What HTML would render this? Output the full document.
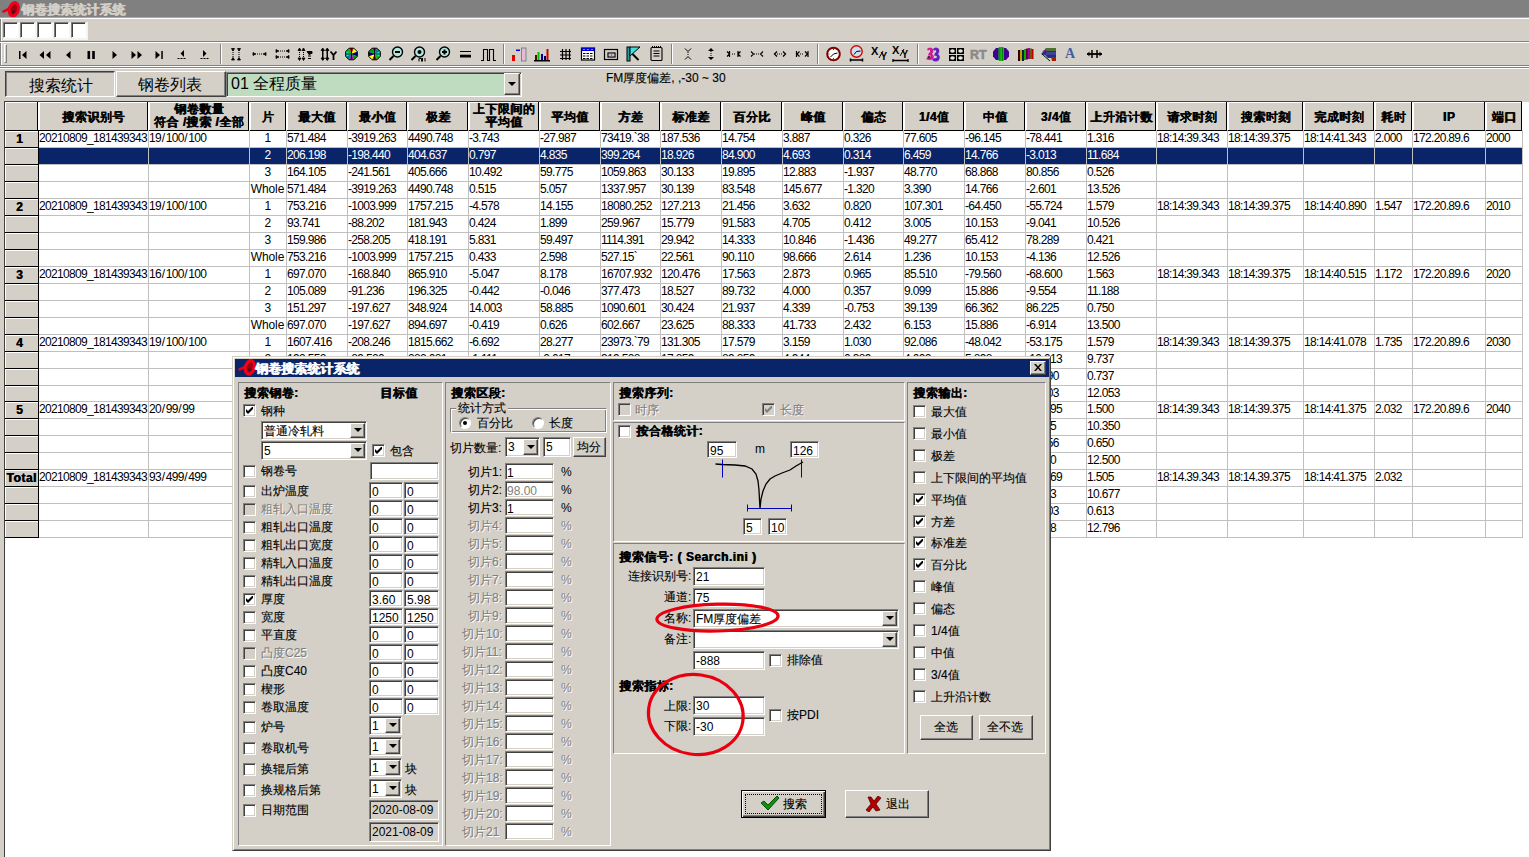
<!DOCTYPE html><html><head><meta charset="utf-8"><style>
*{margin:0;padding:0}
html,body{width:1529px;height:857px;overflow:hidden;background:#D4D0C8;font-family:"Liberation Sans",sans-serif;position:relative}
body>div,body>svg{position:absolute;box-sizing:border-box}
.t{font-size:12px;line-height:13px;white-space:nowrap;color:#000;-webkit-text-stroke:0.12px currentColor}
.ta{font-size:12px;line-height:13px;white-space:nowrap;color:#000}
.tb{font-size:12px;line-height:13px;white-space:nowrap;font-weight:bold;color:#000;text-shadow:0.6px 0 0 currentColor;letter-spacing:0.5px}
.ttl{font-size:13px;line-height:14px;white-space:nowrap;font-weight:bold;text-shadow:0.7px 0 0 currentColor;letter-spacing:0}
.dis{color:#808080;text-shadow:1px 1px 0 #fff}
.n{font-size:12px;line-height:13px;white-space:nowrap;letter-spacing:-0.67px;overflow:hidden}
.big{font-size:16px;line-height:18px;white-space:nowrap;color:#000}
.hd2{text-align:center;line-height:13px}
.hc{background:#D4D0C8;border-right:1px solid #000;border-bottom:1px solid #000;box-shadow:inset 1px 1px #fff}
.box{background:#fff;border:1px solid;border-color:#808080 #fff #fff #808080;box-shadow:inset 1px 1px #404040, 1px 1px 0 1px #F4F4F0;width:15px;height:16px}
.raise{background:#D4D0C8;border:1px solid;border-color:#fff #404040 #404040 #fff;box-shadow:inset -1px -1px #808080}
.btn{background:#D4D0C8;border:1px solid;border-color:#fff #404040 #404040 #fff;box-shadow:inset -1px -1px #808080}
.btn.def{border:1px solid #000;box-shadow:inset 1px 1px #fff, inset -1px -1px #404040, inset -2px -2px #808080}
.fld{border:1px solid;border-color:#808080 #fff #fff #808080;box-shadow:inset 1px 1px #404040, inset -1px -1px #D4D0C8}
.cb{width:13px;height:13px;border:1px solid;border-color:#808080 #fff #fff #808080;box-shadow:inset 1px 1px #404040, inset -1px -1px #D4D0C8}
.pan{border:1px solid;border-color:#808080 #fff #fff #808080}
.etch{border:1px solid;border-color:#808080 #fff #fff #808080;box-shadow:inset 1px 1px #fff, inset -1px -1px #808080}
.dlg{background:#D4D0C8;border:1px solid;border-color:#D4D0C8 #404040 #404040 #D4D0C8;box-shadow:inset 1px 1px #fff, inset -1px -1px #808080}
.arr{width:0;height:0;border-left:4px solid transparent;border-right:4px solid transparent;border-top:4px solid #000}
.radio{width:12px;height:12px;border-radius:50%;background:#fff;border:1px solid;border-color:#808080 #fff #fff #808080;box-shadow:inset 1px 1px #404040}
.radio .dot{position:absolute;left:3px;top:3px;width:4px;height:4px;border-radius:50%;background:#000}

</style></head><body>
<div style="left:0;top:0;width:1529px;height:17px;background:#808080"></div>
<svg style="position:absolute;left:2px;top:1px" width="18" height="17" viewBox="0 0 18 17"><path d="M1.5 10.5 L5 9 L8.5 6" stroke="#E8001A" stroke-width="2.6" fill="none" stroke-linecap="round"/><ellipse cx="11.8" cy="8.4" rx="4.4" ry="6.9" transform="rotate(15 11.8 8.4)" fill="#A00010" stroke="#F2001A" stroke-width="3"/><circle cx="11.5" cy="10.8" r="1.4" fill="#301818"/></svg>
<div class="ttl" style="left:21px;top:3px;color:#D4D0C8">钢卷搜索统计系统</div>
<div style="left:0;top:17px;width:1529px;height:1px;background:#A8A8A8"></div>
<div style="left:0;top:18px;width:1529px;height:1px;background:#fff"></div>
<div style="left:0;top:19px;width:1px;height:50px;background:#808080"></div>
<div style="left:1px;top:19px;width:1px;height:50px;background:#fff"></div>
<div class="box" style="left:3px;top:22px"></div>
<div class="box" style="left:20px;top:22px"></div>
<div class="box" style="left:37px;top:22px"></div>
<div class="box" style="left:54px;top:22px"></div>
<div class="box" style="left:71px;top:22px"></div>
<div style="left:0;top:41px;width:1529px;height:1px;background:#808080"></div>
<div style="left:0;top:42px;width:1529px;height:1px;background:#fff"></div>
<div style="left:4px;top:44px;width:3px;height:19px;border-left:1px solid #fff;border-top:1px solid #fff;border-right:1px solid #808080;border-bottom:1px solid #808080"></div>
<div style="left:0;top:65px;width:1529px;height:1px;background:#808080"></div>
<div style="left:0;top:66px;width:1529px;height:1px;background:#fff"></div>
<div style="left:0;top:67px;width:1529px;height:1px;background:#808080"></div>
<div style="left:0;top:68px;width:1529px;height:1px;background:#fff"></div>
<svg style="position:absolute;left:18px;top:46px" width="10" height="14" viewBox="0 0 10 14"><rect x="1" y="5" width="1.5" height="8" fill="#000"/><path d="M8.5 5v8l-4.5-4z" fill="#000"/></svg>
<svg style="position:absolute;left:38px;top:46px" width="14" height="14" viewBox="0 0 14 14"><path d="M6 5v8l-4.5-4zM12.5 5v8l-4.5-4z" fill="#000"/></svg>
<svg style="position:absolute;left:64px;top:46px" width="8" height="14" viewBox="0 0 8 14"><path d="M6.5 5v8l-4.5-4z" fill="#000"/></svg>
<svg style="position:absolute;left:86px;top:46px" width="12" height="14" viewBox="0 0 12 14"><rect x="1.5" y="5" width="2.6" height="8" fill="#000"/><rect x="6.2" y="5" width="2.6" height="8" fill="#000"/></svg>
<svg style="position:absolute;left:111px;top:46px" width="8" height="14" viewBox="0 0 8 14"><path d="M1.5 5v8l4.5-4z" fill="#000"/></svg>
<svg style="position:absolute;left:130px;top:46px" width="14" height="14" viewBox="0 0 14 14"><path d="M1.5 5v8l4.5-4zM7.5 5v8l4.5-4z" fill="#000"/></svg>
<svg style="position:absolute;left:154px;top:46px" width="10" height="14" viewBox="0 0 10 14"><path d="M1.5 5v8l4.5-4z" fill="#000"/><rect x="7.3" y="5" width="1.5" height="8" fill="#000"/></svg>
<svg style="position:absolute;left:176px;top:46px" width="12" height="14" viewBox="0 0 12 14"><path d="M8 4v7l-3.5-3.5z" fill="#000"/><path d="M1.5 12.5h9" stroke="#000" stroke-dasharray="2 1"/></svg>
<svg style="position:absolute;left:199px;top:46px" width="12" height="14" viewBox="0 0 12 14"><path d="M4 4v7l3.5-3.5z" fill="#000"/><path d="M1.5 12.5h9" stroke="#000" stroke-dasharray="2 1"/></svg>
<div style="left:220px;top:44px;width:2px;height:20px;border-left:1px solid #808080;border-right:1px solid #fff"></div>
<svg style="position:absolute;left:230px;top:46px" width="13" height="16" viewBox="0 0 13 16"><path d="M1.5 2.5h3l-1.5 2.5zM7.5 2.5h3l-1.5 2.5zM1.5 14h3l-1.5-2.5zM7.5 14h3l-1.5-2.5z" fill="#000" stroke="#000" stroke-width="0.8"/><path d="M3 4v8M9 4v8" stroke="#000" stroke-dasharray="1 1"/></svg>
<svg style="position:absolute;left:252px;top:46px" width="15" height="16" viewBox="0 0 15 16"><path d="M1 6.5v3l2.5-1.5zM14 6.5v3l-2.5-1.5z" fill="#000" stroke="#000" stroke-width="0.8"/><path d="M3 8h9" stroke="#000" stroke-dasharray="1 1"/></svg>
<svg style="position:absolute;left:275px;top:46px" width="15" height="16" viewBox="0 0 15 16"><path d="M1 3.5v3l2.5-1.5zM14 3.5v3l-2.5-1.5zM1 9.5v3l2.5-1.5zM14 9.5v3l-2.5-1.5z" fill="#000" stroke="#000" stroke-width="0.8"/><path d="M3 5h9M3 11h9" stroke="#000" stroke-dasharray="1 1"/></svg>
<svg style="position:absolute;left:297px;top:46px" width="16" height="16" viewBox="0 0 16 16"><path d="M1 4.5h3l-1.5-2.5zM5 4.5h3l-1.5-2.5zM1 12h3l-1.5 2.5zM5 12h3l-1.5 2.5z" fill="#000" stroke="#000" stroke-width="0.8"/><path d="M2.5 4v8M6.5 4v8" stroke="#000" stroke-dasharray="1 1"/><path d="M10 5.5h5v2h-1.5l-1 1.5zM11 10h3M11 12.5h3" stroke="#000" fill="#000" stroke-width="1"/></svg>
<svg style="position:absolute;left:320px;top:46px" width="17" height="16" viewBox="0 0 17 16"><path d="M1 4.5h3.5l-1.75-2.5zM5.5 4.5h3.5l-1.75-2.5zM1 12h3.5l-1.75 2.5zM5.5 12h3.5l-1.75 2.5z" fill="#000" stroke="#000" stroke-width="0.8"/><path d="M2.75 4v8M7.25 4v8" stroke="#000" stroke-width="1.5"/><path d="M10.5 5.5l3 3.5 3-3.5M13.5 9v5" stroke="#000" stroke-width="1.8" fill="none"/></svg>
<svg style="position:absolute;left:345px;top:47px" width="13" height="14" viewBox="0 0 13 14"><path d="M6.5 7L4.09 1.18L8.91 1.18z" fill="#C00000"/><path d="M6.5 7L8.91 1.18L12.32 4.59z" fill="#FFFF00"/><path d="M6.5 7L12.32 4.59L12.32 9.41z" fill="#0000C0"/><path d="M6.5 7L12.32 9.41L8.91 12.82z" fill="#00A000"/><path d="M6.5 7L8.91 12.82L4.09 12.82z" fill="#A000C0"/><path d="M6.5 7L4.09 12.82L0.68 9.41z" fill="#008080"/><path d="M6.5 7L0.68 9.41L0.68 4.59z" fill="#00E0E0"/><path d="M6.5 7L0.68 4.59L4.09 1.18z" fill="#00C000"/><polygon points="4.09,1.18 8.91,1.18 12.32,4.59 12.32,9.41 8.91,12.82 4.09,12.82 0.68,9.41 0.68,4.59" fill="none" stroke="#000" stroke-width="1"/><path d="M6.5 1v12M0.5 7h12" stroke="#000" stroke-width="0.8"/></svg>
<svg style="position:absolute;left:368px;top:47px" width="13" height="14" viewBox="0 0 13 14"><path d="M6.5 7L4.09 1.18L8.91 1.18z" fill="#A000C0"/><path d="M6.5 7L8.91 1.18L12.32 4.59z" fill="#008080"/><path d="M6.5 7L12.32 4.59L12.32 9.41z" fill="#00E0E0"/><path d="M6.5 7L12.32 9.41L8.91 12.82z" fill="#00C000"/><path d="M6.5 7L8.91 12.82L4.09 12.82z" fill="#C00000"/><path d="M6.5 7L4.09 12.82L0.68 9.41z" fill="#FFFF00"/><path d="M6.5 7L0.68 9.41L0.68 4.59z" fill="#0000C0"/><path d="M6.5 7L0.68 4.59L4.09 1.18z" fill="#00A000"/><polygon points="4.09,1.18 8.91,1.18 12.32,4.59 12.32,9.41 8.91,12.82 4.09,12.82 0.68,9.41 0.68,4.59" fill="none" stroke="#000" stroke-width="1"/><path d="M6.5 1v12M0.5 7h12" stroke="#000" stroke-width="0.8"/></svg>
<svg style="position:absolute;left:388px;top:46px" width="16" height="16" viewBox="0 0 16 16"><circle cx="9.5" cy="6" r="5" fill="#B0E8E0" stroke="#000" stroke-width="1.4"/><path d="M5.5 10l-4 4" stroke="#000" stroke-width="2"/><rect x="7" y="5" width="5" height="2" fill="#000"/></svg>
<svg style="position:absolute;left:410px;top:46px" width="16" height="16" viewBox="0 0 16 16"><circle cx="9.5" cy="6" r="5" fill="#B0E8E0" stroke="#000" stroke-width="1.4"/><path d="M5.5 10l-4 4" stroke="#000" stroke-width="2"/><circle cx="9.5" cy="6" r="2" fill="#000"/><path d="M9 15.5v-3h2.5v3M12.5 12v3.5M15 12v3.5" stroke="#000" stroke-width="1" fill="none"/></svg>
<svg style="position:absolute;left:435px;top:46px" width="16" height="16" viewBox="0 0 16 16"><circle cx="9.5" cy="6" r="5" fill="#B0E8E0" stroke="#000" stroke-width="1.4"/><path d="M5.5 10l-4 4" stroke="#000" stroke-width="2"/><rect x="7" y="5" width="5" height="2" fill="#000"/><rect x="8.5" y="3.5" width="2" height="5" fill="#000"/></svg>
<svg style="position:absolute;left:459px;top:46px" width="13" height="16" viewBox="0 0 13 16"><rect x="1" y="5" width="11" height="1" fill="#000"/><rect x="1" y="8.7" width="11" height="2.8" fill="#000"/></svg>
<svg style="position:absolute;left:480px;top:46px" width="17" height="16" viewBox="0 0 17 16"><path d="M1 14.5h2.5v-11h4v11h2v-11h4v11h2.5" stroke="#000" stroke-width="1.1" fill="none"/></svg>
<div style="left:503px;top:44px;width:2px;height:20px;border-left:1px solid #808080;border-right:1px solid #fff"></div>
<svg style="position:absolute;left:511px;top:46px" width="17" height="16" viewBox="0 0 17 16"><rect x="1" y="9" width="3" height="6" fill="#E00000"/><rect x="5" y="3.5" width="4" height="1.5" fill="#0000E0"/><rect x="10.5" y="2" width="4.5" height="13" fill="#E8B8D8" stroke="#708080" stroke-width="0.9"/></svg>
<svg style="position:absolute;left:533px;top:46px" width="18" height="16" viewBox="0 0 18 16"><rect x="2" y="9" width="2" height="5" fill="#600000"/><rect x="4.5" y="6" width="2" height="8" fill="#00C000"/><rect x="8" y="8" width="2" height="6" fill="#0000A0"/><rect x="11" y="10" width="2" height="4" fill="#000060"/><rect x="13.5" y="3" width="2" height="11" fill="#D00000"/><rect x="1" y="14" width="16" height="1.5" fill="#000"/></svg>
<svg style="position:absolute;left:559px;top:46px" width="13" height="16" viewBox="0 0 13 16"><path d="M3.5 3v11M7 3v11M10.5 3v11M1 5.5h11M1 9h11M1 12.5h11" stroke="#000" stroke-width="1.2"/></svg>
<svg style="position:absolute;left:580px;top:46px" width="16" height="16" viewBox="0 0 16 16"><rect x="1.5" y="2" width="13" height="12" fill="#fff" stroke="#000" stroke-width="1.2"/><rect x="1.5" y="2" width="13" height="3" fill="#0000E0"/><path d="M3.5 3.5h1M7.5 3.5h1M11.5 3.5h1" stroke="#fff"/><path d="M3 7.5h10M3 10h10M3 12.5h10" stroke="#000" stroke-dasharray="2.5 1"/></svg>
<svg style="position:absolute;left:603px;top:46px" width="17" height="16" viewBox="0 0 17 16"><rect x="1.5" y="3.5" width="13" height="10" fill="none" stroke="#000" stroke-width="1.2"/><rect x="5" y="7" width="7" height="4" fill="#fff" stroke="#000" stroke-width="1.2"/><path d="M6.5 9h4" stroke="#000" stroke-dasharray="1 0.5"/></svg>
<svg style="position:absolute;left:626px;top:45px" width="16" height="17" viewBox="0 0 16 17"><rect x="1" y="2" width="3" height="14" fill="#20A0A0" stroke="#000" stroke-width="1"/><path d="M4 2h10l-10 9z" fill="#40E0E0" stroke="#000" stroke-width="1"/><path d="M6.5 9l6 6" stroke="#000" stroke-width="2"/></svg>
<svg style="position:absolute;left:650px;top:45px" width="14" height="17" viewBox="0 0 14 17"><rect x="1" y="2.5" width="11" height="13" rx="1" fill="#D4D0C8" stroke="#000" stroke-width="1.1"/><path d="M2 1.5h9" stroke="#000" stroke-dasharray="1 1"/><path d="M3.5 6h6M3.5 8.5h6M3.5 11h6" stroke="#000" stroke-width="1"/></svg>
<div style="left:671px;top:44px;width:2px;height:20px;border-left:1px solid #808080;border-right:1px solid #fff"></div>
<svg style="position:absolute;left:683px;top:46px" width="10" height="16" viewBox="0 0 10 16"><path d="M2 2.5l3 3 3-3M2 13.5l3-3 3 3" stroke="#000" stroke-width="1" fill="none"/><path d="M5 6v4" stroke="#000" stroke-dasharray="1 1"/></svg>
<svg style="position:absolute;left:706px;top:46px" width="10" height="16" viewBox="0 0 10 16"><path d="M2 5l3-3 3 3zM2 11l3 3 3-3z" fill="#000"/><path d="M5 5v6" stroke="#000" stroke-dasharray="1 1"/></svg>
<svg style="position:absolute;left:726px;top:46px" width="16" height="16" viewBox="0 0 16 16"><path d="M1 5.5l2.5 2.5-2.5 2.5M3.5 5v6M14.5 5.5l-2.5 2.5 2.5 2.5M12 5v6" stroke="#000" stroke-width="1.2" fill="none"/><path d="M6 8h4" stroke="#000" stroke-dasharray="1 1"/></svg>
<svg style="position:absolute;left:750px;top:46px" width="14" height="16" viewBox="0 0 14 16"><path d="M1 5.5l2.5 2.5-2.5 2.5M13 5.5l-2.5 2.5 2.5 2.5" stroke="#000" stroke-width="1.1" fill="none"/><path d="M4 8h6" stroke="#000" stroke-dasharray="1 1"/></svg>
<svg style="position:absolute;left:773px;top:46px" width="14" height="16" viewBox="0 0 14 16"><path d="M4 5.5l-2.5 2.5 2.5 2.5M10 5.5l2.5 2.5-2.5 2.5" stroke="#000" stroke-width="1.3" fill="none"/><path d="M4 8h6" stroke="#000" stroke-dasharray="1 1"/></svg>
<svg style="position:absolute;left:795px;top:46px" width="15" height="16" viewBox="0 0 15 16"><path d="M1.5 5v6M4.5 5.5l-2.5 2.5 2.5 2.5M13 5v6M10 5.5l2.5 2.5-2.5 2.5" stroke="#000" stroke-width="1.2" fill="none"/><path d="M5 8h4" stroke="#000" stroke-dasharray="1 1"/></svg>
<div style="left:817px;top:44px;width:2px;height:20px;border-left:1px solid #808080;border-right:1px solid #fff"></div>
<svg style="position:absolute;left:825px;top:45px" width="17" height="17" viewBox="0 0 17 17"><circle cx="8.5" cy="9" r="6.3" fill="#fff" stroke="#800000" stroke-width="2"/><path d="M8.5 9l4-1M8.5 9l-3 3" stroke="#000" stroke-width="1"/><circle cx="8.5" cy="4.5" r="0.5" fill="#000"/><circle cx="4" cy="9" r="0.5" fill="#000"/><circle cx="8.5" cy="13.5" r="0.5" fill="#000"/></svg>
<svg style="position:absolute;left:849px;top:44px" width="16" height="18" viewBox="0 0 16 18"><circle cx="7.5" cy="7.5" r="5.7" fill="#C8E0F0" stroke="#E00000" stroke-width="1.4"/><path d="M7.5 7.5l4-0.5M7.5 7.5l-2.5 3" stroke="#000" stroke-width="1"/><path d="M1.5 16h12M1.5 14.5v3M13.5 14.5v3" stroke="#000" stroke-width="1.5"/></svg>
<svg style="position:absolute;left:871px;top:45px" width="17" height="16" viewBox="0 0 17 16"><text x="0" y="10" font-family="Liberation Sans" font-weight="bold" font-size="11" fill="#000">X</text><path d="M8 13l4-7" stroke="#000" stroke-width="1"/><text x="9.5" y="15" font-family="Liberation Sans" font-weight="bold" font-size="10" fill="#000">Y</text></svg>
<svg style="position:absolute;left:892px;top:44px" width="18" height="18" viewBox="0 0 18 18"><text x="0" y="10" font-family="Liberation Sans" font-weight="bold" font-size="11" fill="#000">X</text><path d="M8 12l4-7" stroke="#000" stroke-width="1"/><text x="9.5" y="14" font-family="Liberation Sans" font-weight="bold" font-size="10" fill="#000">Y</text><path d="M1 16.5h15M1 15v3M16 15v3" stroke="#000" stroke-width="1.3"/></svg>
<div style="left:917px;top:44px;width:2px;height:20px;border-left:1px solid #808080;border-right:1px solid #fff"></div>
<svg style="position:absolute;left:925px;top:45px" width="16" height="18" viewBox="0 0 16 18"><path d="M2 4 Q5 1 8 4 Q9 7 7 9 Q10 11 8 14 Q5 16 1 14 L3 12 Q6 13 6 11 Q5 10 3 10 L4 8 Q6 7 5 5 Q4 4 3 6z" fill="#D01890"/><path d="M8 4 Q11 1 14 4 Q15 7 13 9 Q16 11 14 15 Q11 18 7 15 L9 13 Q12 14 12 11.5 Q11 10.5 9 10.5 L10 8 Q12 7 11 5.5 Q10 4.5 9 6z" fill="#6020C0"/><circle cx="4" cy="12" r="1.5" fill="#502050"/></svg>
<svg style="position:absolute;left:948px;top:46px" width="17" height="16" viewBox="0 0 17 16"><rect x="1" y="2" width="7" height="6" fill="#000"/><rect x="9" y="2" width="7" height="6" fill="#000"/><rect x="1" y="9" width="7" height="6" fill="#000"/><rect x="9" y="9" width="7" height="6" fill="#000"/><ellipse cx="4.5" cy="5" rx="2.3" ry="1.8" fill="#E8E8E8"/><ellipse cx="12.5" cy="5" rx="2.3" ry="1.8" fill="#E8E8E8"/><ellipse cx="4.5" cy="12" rx="2.3" ry="1.8" fill="#E8E8E8"/><ellipse cx="12.5" cy="12" rx="2.3" ry="1.8" fill="#E8E8E8"/></svg>
<svg style="position:absolute;left:970px;top:46px" width="18" height="16" viewBox="0 0 18 16"><text x="0" y="13" font-family="Liberation Sans" font-weight="bold" font-size="12.5" fill="#8A8A8A" stroke="#8A8A8A" stroke-width="0.6">RT</text></svg>
<svg style="position:absolute;left:992px;top:46px" width="19" height="16" viewBox="0 0 19 16"><path d="M4 2h10l3 3.5v5l-3 3.5h-10l-3-3.5v-5z" fill="#400090"/><rect x="6.5" y="1" width="5.5" height="14" rx="1" fill="#10C010"/><path d="M7.8 1.5v13M10.5 1.5v13" stroke="#007000" stroke-width="0.8"/></svg>
<svg style="position:absolute;left:1017px;top:46px" width="17" height="16" viewBox="0 0 17 16"><rect x="1" y="4" width="2" height="11" fill="#300000"/><rect x="3" y="3.5" width="2" height="11" fill="#C0A000"/><rect x="5" y="4" width="2" height="11" fill="#002040"/><rect x="7" y="3" width="2" height="11" fill="#00B000"/><rect x="9" y="2.5" width="2" height="11" fill="#600040"/><rect x="11" y="2" width="2" height="11" fill="#A000A0"/><rect x="13" y="2.5" width="2" height="10.5" fill="#606000"/><rect x="15" y="3" width="1.5" height="10" fill="#C00000"/></svg>
<svg style="position:absolute;left:1040px;top:45px" width="17" height="17" viewBox="0 0 17 17"><path d="M6 3h10v12h-3l-1-2h-4l-3-3-4-1 3-3z" fill="#203080"/><path d="M6 3h10v3h-10z" fill="#507030"/><path d="M6 7h10v3h-10z" fill="#4040A0"/><path d="M11 12h5v4h-4z" fill="#A02000"/><path d="M2 7l2-2 3 1" fill="#A000C0"/><path d="M2 9l8 7" stroke="#000" stroke-width="1"/></svg>
<svg style="position:absolute;left:1064px;top:45px" width="15" height="16" viewBox="0 0 15 16"><text x="1" y="13" font-family="Liberation Serif" font-weight="bold" font-size="14" fill="#4060A0">A</text></svg>
<svg style="position:absolute;left:1086px;top:46px" width="17" height="16" viewBox="0 0 17 16"><path d="M1 8h15" stroke="#000" stroke-width="1.8"/><path d="M6 4v8M11 4v8" stroke="#000" stroke-width="1.5"/><path d="M1 8l2.5-2.5v5zM16 8l-2.5-2.5v5z" fill="#000"/></svg>
<div style="left:5px;top:71px;width:110px;height:26px;border:1px solid;border-color:#404040 #fff #fff #404040;box-shadow:inset 1px 1px #808080"></div>
<div class="big" style="left:29px;top:77px">搜索统计</div>
<div class="raise" style="left:116px;top:71px;width:110px;height:26px"></div>
<div class="big" style="left:138px;top:76px">钢卷列表</div>
<div style="left:226px;top:72px;width:296px;height:25px;background:#C0DCC0;border:1px solid;border-color:#808080 #fff #fff #808080;box-shadow:inset 1px 1px #404040, inset -1px -1px #D4D0C8"></div>
<div class="big" style="left:231px;top:75px">01 全程质量</div>
<div class="raise" style="left:504px;top:73px;width:16px;height:22px;box-shadow:inset -1px -1px #808080, inset 1px 1px #D4D0C8"></div>
<div class="arr" style="left:508px;top:82px"></div>
<div class="t" style="left:606px;top:72px">FM厚度偏差, ,-30 ~ 30</div>
<div style="left:4px;top:102px;width:1525px;height:755px;background:#fff"></div>
<div style="left:4px;top:102px;width:1px;height:755px;background:#404040"></div>
<div style="left:4px;top:101px;width:1518px;height:1px;background:#404040"></div>
<div class="hc" style="left:5px;top:102px;width:33px;height:29px"></div>
<div class="hc" style="left:39px;top:102px;width:109px;height:29px"></div>
<div class="tb" style="left:39px;top:111px;width:109px;text-align:center">搜索识别号</div>
<div class="hc" style="left:149px;top:102px;width:100px;height:29px"></div>
<div class="tb hd2" style="left:149px;top:103px;width:100px">钢卷数量<br>符合 /搜索 /全部</div>
<div class="hc" style="left:250px;top:102px;width:36px;height:29px"></div>
<div class="tb" style="left:250px;top:111px;width:36px;text-align:center">片</div>
<div class="hc" style="left:287px;top:102px;width:60px;height:29px"></div>
<div class="tb" style="left:287px;top:111px;width:60px;text-align:center">最大值</div>
<div class="hc" style="left:348px;top:102px;width:59px;height:29px"></div>
<div class="tb" style="left:348px;top:111px;width:59px;text-align:center">最小值</div>
<div class="hc" style="left:408px;top:102px;width:60px;height:29px"></div>
<div class="tb" style="left:408px;top:111px;width:60px;text-align:center">极差</div>
<div class="hc" style="left:469px;top:102px;width:70px;height:29px"></div>
<div class="tb hd2" style="left:469px;top:103px;width:70px">上下限间的<br>平均值</div>
<div class="hc" style="left:540px;top:102px;width:60px;height:29px"></div>
<div class="tb" style="left:540px;top:111px;width:60px;text-align:center">平均值</div>
<div class="hc" style="left:601px;top:102px;width:59px;height:29px"></div>
<div class="tb" style="left:601px;top:111px;width:59px;text-align:center">方差</div>
<div class="hc" style="left:661px;top:102px;width:60px;height:29px"></div>
<div class="tb" style="left:661px;top:111px;width:60px;text-align:center">标准差</div>
<div class="hc" style="left:722px;top:102px;width:60px;height:29px"></div>
<div class="tb" style="left:722px;top:111px;width:60px;text-align:center">百分比</div>
<div class="hc" style="left:783px;top:102px;width:60px;height:29px"></div>
<div class="tb" style="left:783px;top:111px;width:60px;text-align:center">峰值</div>
<div class="hc" style="left:844px;top:102px;width:59px;height:29px"></div>
<div class="tb" style="left:844px;top:111px;width:59px;text-align:center">偏态</div>
<div class="hc" style="left:904px;top:102px;width:60px;height:29px"></div>
<div class="tb" style="left:904px;top:111px;width:60px;text-align:center">1/4值</div>
<div class="hc" style="left:965px;top:102px;width:60px;height:29px"></div>
<div class="tb" style="left:965px;top:111px;width:60px;text-align:center">中值</div>
<div class="hc" style="left:1026px;top:102px;width:60px;height:29px"></div>
<div class="tb" style="left:1026px;top:111px;width:60px;text-align:center">3/4值</div>
<div class="hc" style="left:1087px;top:102px;width:69px;height:29px"></div>
<div class="tb" style="left:1087px;top:111px;width:69px;text-align:center">上升沿计数</div>
<div class="hc" style="left:1157px;top:102px;width:70px;height:29px"></div>
<div class="tb" style="left:1157px;top:111px;width:70px;text-align:center">请求时刻</div>
<div class="hc" style="left:1228px;top:102px;width:75px;height:29px"></div>
<div class="tb" style="left:1228px;top:111px;width:75px;text-align:center">搜索时刻</div>
<div class="hc" style="left:1304px;top:102px;width:70px;height:29px"></div>
<div class="tb" style="left:1304px;top:111px;width:70px;text-align:center">完成时刻</div>
<div class="hc" style="left:1375px;top:102px;width:37px;height:29px"></div>
<div class="tb" style="left:1375px;top:111px;width:37px;text-align:center">耗时</div>
<div class="hc" style="left:1413px;top:102px;width:72px;height:29px"></div>
<div class="tb" style="left:1413px;top:111px;width:72px;text-align:center">IP</div>
<div class="hc" style="left:1486px;top:102px;width:36px;height:29px"></div>
<div class="tb" style="left:1486px;top:111px;width:36px;text-align:center">端口</div>
<div class="hc" style="left:5px;top:131px;width:34px;height:17px"></div>
<div style="left:38px;top:147px;width:1484px;height:1px;background:#C0C0C0"></div>
<div class="tb" style="left:3px;top:133px;width:33px;text-align:center">1</div>
<div class="n" style="left:39px;top:132px;width:109px;color:#000">20210809_181439343</div>
<div class="n" style="left:149px;top:132px;width:100px;color:#000">19<span style="letter-spacing:0.6px;padding-left:0.7px">/</span>100<span style="letter-spacing:0.6px;padding-left:0.7px">/</span>100</div>
<div class="n" style="left:249px;top:132px;width:37px;text-align:center;color:#000">1</div>
<div class="n" style="left:287px;top:132px;width:60px;color:#000">571.484</div>
<div class="n" style="left:348px;top:132px;width:59px;color:#000">-3919.263</div>
<div class="n" style="left:408px;top:132px;width:60px;color:#000">4490.748</div>
<div class="n" style="left:469px;top:132px;width:70px;color:#000">-3.743</div>
<div class="n" style="left:540px;top:132px;width:60px;color:#000">-27.987</div>
<div class="n" style="left:601px;top:132px;width:59px;color:#000">73419.`38</div>
<div class="n" style="left:661px;top:132px;width:60px;color:#000">187.536</div>
<div class="n" style="left:722px;top:132px;width:60px;color:#000">14.754</div>
<div class="n" style="left:783px;top:132px;width:60px;color:#000">3.887</div>
<div class="n" style="left:844px;top:132px;width:59px;color:#000">0.326</div>
<div class="n" style="left:904px;top:132px;width:60px;color:#000">77.605</div>
<div class="n" style="left:965px;top:132px;width:60px;color:#000">-96.145</div>
<div class="n" style="left:1026px;top:132px;width:60px;color:#000">-78.441</div>
<div class="n" style="left:1087px;top:132px;width:69px;color:#000">1.316</div>
<div class="n" style="left:1157px;top:132px;width:70px;color:#000">18:14:39.343</div>
<div class="n" style="left:1228px;top:132px;width:75px;color:#000">18:14:39.375</div>
<div class="n" style="left:1304px;top:132px;width:70px;color:#000">18:14:41.343</div>
<div class="n" style="left:1375px;top:132px;width:37px;color:#000">2.000</div>
<div class="n" style="left:1413px;top:132px;width:72px;color:#000">172.20.89.6</div>
<div class="n" style="left:1486px;top:132px;width:36px;color:#000">2000</div>
<div class="hc" style="left:5px;top:148px;width:34px;height:17px"></div>
<div style="left:38px;top:148px;width:1484px;height:16px;background:#0A246A"></div>
<div style="left:38px;top:164px;width:1484px;height:1px;background:#C0C0C0"></div>
<div class="n" style="left:249px;top:149px;width:37px;text-align:center;color:#fff">2</div>
<div class="n" style="left:287px;top:149px;width:60px;color:#fff">206.198</div>
<div class="n" style="left:348px;top:149px;width:59px;color:#fff">-198.440</div>
<div class="n" style="left:408px;top:149px;width:60px;color:#fff">404.637</div>
<div class="n" style="left:469px;top:149px;width:70px;color:#fff">0.797</div>
<div class="n" style="left:540px;top:149px;width:60px;color:#fff">4.835</div>
<div class="n" style="left:601px;top:149px;width:59px;color:#fff">399.264</div>
<div class="n" style="left:661px;top:149px;width:60px;color:#fff">18.926</div>
<div class="n" style="left:722px;top:149px;width:60px;color:#fff">84.900</div>
<div class="n" style="left:783px;top:149px;width:60px;color:#fff">4.693</div>
<div class="n" style="left:844px;top:149px;width:59px;color:#fff">0.314</div>
<div class="n" style="left:904px;top:149px;width:60px;color:#fff">6.459</div>
<div class="n" style="left:965px;top:149px;width:60px;color:#fff">14.766</div>
<div class="n" style="left:1026px;top:149px;width:60px;color:#fff">-3.013</div>
<div class="n" style="left:1087px;top:149px;width:69px;color:#fff">11.684</div>
<div class="hc" style="left:5px;top:165px;width:34px;height:17px"></div>
<div style="left:38px;top:181px;width:1484px;height:1px;background:#C0C0C0"></div>
<div class="n" style="left:249px;top:166px;width:37px;text-align:center;color:#000">3</div>
<div class="n" style="left:287px;top:166px;width:60px;color:#000">164.105</div>
<div class="n" style="left:348px;top:166px;width:59px;color:#000">-241.561</div>
<div class="n" style="left:408px;top:166px;width:60px;color:#000">405.666</div>
<div class="n" style="left:469px;top:166px;width:70px;color:#000">10.492</div>
<div class="n" style="left:540px;top:166px;width:60px;color:#000">59.775</div>
<div class="n" style="left:601px;top:166px;width:59px;color:#000">1059.863</div>
<div class="n" style="left:661px;top:166px;width:60px;color:#000">30.133</div>
<div class="n" style="left:722px;top:166px;width:60px;color:#000">19.895</div>
<div class="n" style="left:783px;top:166px;width:60px;color:#000">12.883</div>
<div class="n" style="left:844px;top:166px;width:59px;color:#000">-1.937</div>
<div class="n" style="left:904px;top:166px;width:60px;color:#000">48.770</div>
<div class="n" style="left:965px;top:166px;width:60px;color:#000">68.868</div>
<div class="n" style="left:1026px;top:166px;width:60px;color:#000">80.856</div>
<div class="n" style="left:1087px;top:166px;width:69px;color:#000">0.526</div>
<div class="hc" style="left:5px;top:182px;width:34px;height:17px"></div>
<div style="left:38px;top:198px;width:1484px;height:1px;background:#C0C0C0"></div>
<div class="n" style="left:249px;top:183px;width:37px;text-align:center;color:#000;letter-spacing:-0.1px">Whole</div>
<div class="n" style="left:287px;top:183px;width:60px;color:#000">571.484</div>
<div class="n" style="left:348px;top:183px;width:59px;color:#000">-3919.263</div>
<div class="n" style="left:408px;top:183px;width:60px;color:#000">4490.748</div>
<div class="n" style="left:469px;top:183px;width:70px;color:#000">0.515</div>
<div class="n" style="left:540px;top:183px;width:60px;color:#000">5.057</div>
<div class="n" style="left:601px;top:183px;width:59px;color:#000">1337.957</div>
<div class="n" style="left:661px;top:183px;width:60px;color:#000">30.139</div>
<div class="n" style="left:722px;top:183px;width:60px;color:#000">83.548</div>
<div class="n" style="left:783px;top:183px;width:60px;color:#000">145.677</div>
<div class="n" style="left:844px;top:183px;width:59px;color:#000">-1.320</div>
<div class="n" style="left:904px;top:183px;width:60px;color:#000">3.390</div>
<div class="n" style="left:965px;top:183px;width:60px;color:#000">14.766</div>
<div class="n" style="left:1026px;top:183px;width:60px;color:#000">-2.601</div>
<div class="n" style="left:1087px;top:183px;width:69px;color:#000">13.526</div>
<div class="hc" style="left:5px;top:199px;width:34px;height:17px"></div>
<div style="left:38px;top:215px;width:1484px;height:1px;background:#C0C0C0"></div>
<div class="tb" style="left:3px;top:201px;width:33px;text-align:center">2</div>
<div class="n" style="left:39px;top:200px;width:109px;color:#000">20210809_181439343</div>
<div class="n" style="left:149px;top:200px;width:100px;color:#000">19<span style="letter-spacing:0.6px;padding-left:0.7px">/</span>100<span style="letter-spacing:0.6px;padding-left:0.7px">/</span>100</div>
<div class="n" style="left:249px;top:200px;width:37px;text-align:center;color:#000">1</div>
<div class="n" style="left:287px;top:200px;width:60px;color:#000">753.216</div>
<div class="n" style="left:348px;top:200px;width:59px;color:#000">-1003.999</div>
<div class="n" style="left:408px;top:200px;width:60px;color:#000">1757.215</div>
<div class="n" style="left:469px;top:200px;width:70px;color:#000">-4.578</div>
<div class="n" style="left:540px;top:200px;width:60px;color:#000">14.155</div>
<div class="n" style="left:601px;top:200px;width:59px;color:#000">18080.252</div>
<div class="n" style="left:661px;top:200px;width:60px;color:#000">127.213</div>
<div class="n" style="left:722px;top:200px;width:60px;color:#000">21.456</div>
<div class="n" style="left:783px;top:200px;width:60px;color:#000">3.632</div>
<div class="n" style="left:844px;top:200px;width:59px;color:#000">0.820</div>
<div class="n" style="left:904px;top:200px;width:60px;color:#000">107.301</div>
<div class="n" style="left:965px;top:200px;width:60px;color:#000">-64.450</div>
<div class="n" style="left:1026px;top:200px;width:60px;color:#000">-55.724</div>
<div class="n" style="left:1087px;top:200px;width:69px;color:#000">1.579</div>
<div class="n" style="left:1157px;top:200px;width:70px;color:#000">18:14:39.343</div>
<div class="n" style="left:1228px;top:200px;width:75px;color:#000">18:14:39.375</div>
<div class="n" style="left:1304px;top:200px;width:70px;color:#000">18:14:40.890</div>
<div class="n" style="left:1375px;top:200px;width:37px;color:#000">1.547</div>
<div class="n" style="left:1413px;top:200px;width:72px;color:#000">172.20.89.6</div>
<div class="n" style="left:1486px;top:200px;width:36px;color:#000">2010</div>
<div class="hc" style="left:5px;top:216px;width:34px;height:17px"></div>
<div style="left:38px;top:232px;width:1484px;height:1px;background:#C0C0C0"></div>
<div class="n" style="left:249px;top:217px;width:37px;text-align:center;color:#000">2</div>
<div class="n" style="left:287px;top:217px;width:60px;color:#000">93.741</div>
<div class="n" style="left:348px;top:217px;width:59px;color:#000">-88.202</div>
<div class="n" style="left:408px;top:217px;width:60px;color:#000">181.943</div>
<div class="n" style="left:469px;top:217px;width:70px;color:#000">0.424</div>
<div class="n" style="left:540px;top:217px;width:60px;color:#000">1.899</div>
<div class="n" style="left:601px;top:217px;width:59px;color:#000">259.967</div>
<div class="n" style="left:661px;top:217px;width:60px;color:#000">15.779</div>
<div class="n" style="left:722px;top:217px;width:60px;color:#000">91.583</div>
<div class="n" style="left:783px;top:217px;width:60px;color:#000">4.705</div>
<div class="n" style="left:844px;top:217px;width:59px;color:#000">0.412</div>
<div class="n" style="left:904px;top:217px;width:60px;color:#000">3.005</div>
<div class="n" style="left:965px;top:217px;width:60px;color:#000">10.153</div>
<div class="n" style="left:1026px;top:217px;width:60px;color:#000">-9.041</div>
<div class="n" style="left:1087px;top:217px;width:69px;color:#000">10.526</div>
<div class="hc" style="left:5px;top:233px;width:34px;height:17px"></div>
<div style="left:38px;top:249px;width:1484px;height:1px;background:#C0C0C0"></div>
<div class="n" style="left:249px;top:234px;width:37px;text-align:center;color:#000">3</div>
<div class="n" style="left:287px;top:234px;width:60px;color:#000">159.986</div>
<div class="n" style="left:348px;top:234px;width:59px;color:#000">-258.205</div>
<div class="n" style="left:408px;top:234px;width:60px;color:#000">418.191</div>
<div class="n" style="left:469px;top:234px;width:70px;color:#000">5.831</div>
<div class="n" style="left:540px;top:234px;width:60px;color:#000">59.497</div>
<div class="n" style="left:601px;top:234px;width:59px;color:#000">1114.391</div>
<div class="n" style="left:661px;top:234px;width:60px;color:#000">29.942</div>
<div class="n" style="left:722px;top:234px;width:60px;color:#000">14.333</div>
<div class="n" style="left:783px;top:234px;width:60px;color:#000">10.846</div>
<div class="n" style="left:844px;top:234px;width:59px;color:#000">-1.436</div>
<div class="n" style="left:904px;top:234px;width:60px;color:#000">49.277</div>
<div class="n" style="left:965px;top:234px;width:60px;color:#000">65.412</div>
<div class="n" style="left:1026px;top:234px;width:60px;color:#000">78.289</div>
<div class="n" style="left:1087px;top:234px;width:69px;color:#000">0.421</div>
<div class="hc" style="left:5px;top:250px;width:34px;height:17px"></div>
<div style="left:38px;top:266px;width:1484px;height:1px;background:#C0C0C0"></div>
<div class="n" style="left:249px;top:251px;width:37px;text-align:center;color:#000;letter-spacing:-0.1px">Whole</div>
<div class="n" style="left:287px;top:251px;width:60px;color:#000">753.216</div>
<div class="n" style="left:348px;top:251px;width:59px;color:#000">-1003.999</div>
<div class="n" style="left:408px;top:251px;width:60px;color:#000">1757.215</div>
<div class="n" style="left:469px;top:251px;width:70px;color:#000">0.433</div>
<div class="n" style="left:540px;top:251px;width:60px;color:#000">2.598</div>
<div class="n" style="left:601px;top:251px;width:59px;color:#000">527.15`</div>
<div class="n" style="left:661px;top:251px;width:60px;color:#000">22.561</div>
<div class="n" style="left:722px;top:251px;width:60px;color:#000">90.110</div>
<div class="n" style="left:783px;top:251px;width:60px;color:#000">98.666</div>
<div class="n" style="left:844px;top:251px;width:59px;color:#000">2.614</div>
<div class="n" style="left:904px;top:251px;width:60px;color:#000">1.236</div>
<div class="n" style="left:965px;top:251px;width:60px;color:#000">10.153</div>
<div class="n" style="left:1026px;top:251px;width:60px;color:#000">-4.136</div>
<div class="n" style="left:1087px;top:251px;width:69px;color:#000">12.526</div>
<div class="hc" style="left:5px;top:267px;width:34px;height:17px"></div>
<div style="left:38px;top:283px;width:1484px;height:1px;background:#C0C0C0"></div>
<div class="tb" style="left:3px;top:269px;width:33px;text-align:center">3</div>
<div class="n" style="left:39px;top:268px;width:109px;color:#000">20210809_181439343</div>
<div class="n" style="left:149px;top:268px;width:100px;color:#000">16<span style="letter-spacing:0.6px;padding-left:0.7px">/</span>100<span style="letter-spacing:0.6px;padding-left:0.7px">/</span>100</div>
<div class="n" style="left:249px;top:268px;width:37px;text-align:center;color:#000">1</div>
<div class="n" style="left:287px;top:268px;width:60px;color:#000">697.070</div>
<div class="n" style="left:348px;top:268px;width:59px;color:#000">-168.840</div>
<div class="n" style="left:408px;top:268px;width:60px;color:#000">865.910</div>
<div class="n" style="left:469px;top:268px;width:70px;color:#000">-5.047</div>
<div class="n" style="left:540px;top:268px;width:60px;color:#000">8.178</div>
<div class="n" style="left:601px;top:268px;width:59px;color:#000">16707.932</div>
<div class="n" style="left:661px;top:268px;width:60px;color:#000">120.476</div>
<div class="n" style="left:722px;top:268px;width:60px;color:#000">17.563</div>
<div class="n" style="left:783px;top:268px;width:60px;color:#000">2.873</div>
<div class="n" style="left:844px;top:268px;width:59px;color:#000">0.965</div>
<div class="n" style="left:904px;top:268px;width:60px;color:#000">85.510</div>
<div class="n" style="left:965px;top:268px;width:60px;color:#000">-79.560</div>
<div class="n" style="left:1026px;top:268px;width:60px;color:#000">-68.600</div>
<div class="n" style="left:1087px;top:268px;width:69px;color:#000">1.563</div>
<div class="n" style="left:1157px;top:268px;width:70px;color:#000">18:14:39.343</div>
<div class="n" style="left:1228px;top:268px;width:75px;color:#000">18:14:39.375</div>
<div class="n" style="left:1304px;top:268px;width:70px;color:#000">18:14:40.515</div>
<div class="n" style="left:1375px;top:268px;width:37px;color:#000">1.172</div>
<div class="n" style="left:1413px;top:268px;width:72px;color:#000">172.20.89.6</div>
<div class="n" style="left:1486px;top:268px;width:36px;color:#000">2020</div>
<div class="hc" style="left:5px;top:284px;width:34px;height:17px"></div>
<div style="left:38px;top:300px;width:1484px;height:1px;background:#C0C0C0"></div>
<div class="n" style="left:249px;top:285px;width:37px;text-align:center;color:#000">2</div>
<div class="n" style="left:287px;top:285px;width:60px;color:#000">105.089</div>
<div class="n" style="left:348px;top:285px;width:59px;color:#000">-91.236</div>
<div class="n" style="left:408px;top:285px;width:60px;color:#000">196.325</div>
<div class="n" style="left:469px;top:285px;width:70px;color:#000">-0.442</div>
<div class="n" style="left:540px;top:285px;width:60px;color:#000">-0.046</div>
<div class="n" style="left:601px;top:285px;width:59px;color:#000">377.473</div>
<div class="n" style="left:661px;top:285px;width:60px;color:#000">18.527</div>
<div class="n" style="left:722px;top:285px;width:60px;color:#000">89.732</div>
<div class="n" style="left:783px;top:285px;width:60px;color:#000">4.000</div>
<div class="n" style="left:844px;top:285px;width:59px;color:#000">0.357</div>
<div class="n" style="left:904px;top:285px;width:60px;color:#000">9.099</div>
<div class="n" style="left:965px;top:285px;width:60px;color:#000">15.886</div>
<div class="n" style="left:1026px;top:285px;width:60px;color:#000">-9.554</div>
<div class="n" style="left:1087px;top:285px;width:69px;color:#000">11.188</div>
<div class="hc" style="left:5px;top:301px;width:34px;height:17px"></div>
<div style="left:38px;top:317px;width:1484px;height:1px;background:#C0C0C0"></div>
<div class="n" style="left:249px;top:302px;width:37px;text-align:center;color:#000">3</div>
<div class="n" style="left:287px;top:302px;width:60px;color:#000">151.297</div>
<div class="n" style="left:348px;top:302px;width:59px;color:#000">-197.627</div>
<div class="n" style="left:408px;top:302px;width:60px;color:#000">348.924</div>
<div class="n" style="left:469px;top:302px;width:70px;color:#000">14.003</div>
<div class="n" style="left:540px;top:302px;width:60px;color:#000">58.885</div>
<div class="n" style="left:601px;top:302px;width:59px;color:#000">1090.601</div>
<div class="n" style="left:661px;top:302px;width:60px;color:#000">30.424</div>
<div class="n" style="left:722px;top:302px;width:60px;color:#000">21.937</div>
<div class="n" style="left:783px;top:302px;width:60px;color:#000">4.339</div>
<div class="n" style="left:844px;top:302px;width:59px;color:#000">-0.753</div>
<div class="n" style="left:904px;top:302px;width:60px;color:#000">39.139</div>
<div class="n" style="left:965px;top:302px;width:60px;color:#000">66.362</div>
<div class="n" style="left:1026px;top:302px;width:60px;color:#000">86.225</div>
<div class="n" style="left:1087px;top:302px;width:69px;color:#000">0.750</div>
<div class="hc" style="left:5px;top:318px;width:34px;height:17px"></div>
<div style="left:38px;top:334px;width:1484px;height:1px;background:#C0C0C0"></div>
<div class="n" style="left:249px;top:319px;width:37px;text-align:center;color:#000;letter-spacing:-0.1px">Whole</div>
<div class="n" style="left:287px;top:319px;width:60px;color:#000">697.070</div>
<div class="n" style="left:348px;top:319px;width:59px;color:#000">-197.627</div>
<div class="n" style="left:408px;top:319px;width:60px;color:#000">894.697</div>
<div class="n" style="left:469px;top:319px;width:70px;color:#000">-0.419</div>
<div class="n" style="left:540px;top:319px;width:60px;color:#000">0.626</div>
<div class="n" style="left:601px;top:319px;width:59px;color:#000">602.667</div>
<div class="n" style="left:661px;top:319px;width:60px;color:#000">23.625</div>
<div class="n" style="left:722px;top:319px;width:60px;color:#000">88.333</div>
<div class="n" style="left:783px;top:319px;width:60px;color:#000">41.733</div>
<div class="n" style="left:844px;top:319px;width:59px;color:#000">2.432</div>
<div class="n" style="left:904px;top:319px;width:60px;color:#000">6.153</div>
<div class="n" style="left:965px;top:319px;width:60px;color:#000">15.886</div>
<div class="n" style="left:1026px;top:319px;width:60px;color:#000">-6.914</div>
<div class="n" style="left:1087px;top:319px;width:69px;color:#000">13.500</div>
<div class="hc" style="left:5px;top:335px;width:34px;height:17px"></div>
<div style="left:38px;top:351px;width:1484px;height:1px;background:#C0C0C0"></div>
<div class="tb" style="left:3px;top:337px;width:33px;text-align:center">4</div>
<div class="n" style="left:39px;top:336px;width:109px;color:#000">20210809_181439343</div>
<div class="n" style="left:149px;top:336px;width:100px;color:#000">19<span style="letter-spacing:0.6px;padding-left:0.7px">/</span>100<span style="letter-spacing:0.6px;padding-left:0.7px">/</span>100</div>
<div class="n" style="left:249px;top:336px;width:37px;text-align:center;color:#000">1</div>
<div class="n" style="left:287px;top:336px;width:60px;color:#000">1607.416</div>
<div class="n" style="left:348px;top:336px;width:59px;color:#000">-208.246</div>
<div class="n" style="left:408px;top:336px;width:60px;color:#000">1815.662</div>
<div class="n" style="left:469px;top:336px;width:70px;color:#000">-6.692</div>
<div class="n" style="left:540px;top:336px;width:60px;color:#000">28.277</div>
<div class="n" style="left:601px;top:336px;width:59px;color:#000">23973.`79</div>
<div class="n" style="left:661px;top:336px;width:60px;color:#000">131.305</div>
<div class="n" style="left:722px;top:336px;width:60px;color:#000">17.579</div>
<div class="n" style="left:783px;top:336px;width:60px;color:#000">3.159</div>
<div class="n" style="left:844px;top:336px;width:59px;color:#000">1.030</div>
<div class="n" style="left:904px;top:336px;width:60px;color:#000">92.086</div>
<div class="n" style="left:965px;top:336px;width:60px;color:#000">-48.042</div>
<div class="n" style="left:1026px;top:336px;width:60px;color:#000">-53.175</div>
<div class="n" style="left:1087px;top:336px;width:69px;color:#000">1.579</div>
<div class="n" style="left:1157px;top:336px;width:70px;color:#000">18:14:39.343</div>
<div class="n" style="left:1228px;top:336px;width:75px;color:#000">18:14:39.375</div>
<div class="n" style="left:1304px;top:336px;width:70px;color:#000">18:14:41.078</div>
<div class="n" style="left:1375px;top:336px;width:37px;color:#000">1.735</div>
<div class="n" style="left:1413px;top:336px;width:72px;color:#000">172.20.89.6</div>
<div class="n" style="left:1486px;top:336px;width:36px;color:#000">2030</div>
<div class="hc" style="left:5px;top:352px;width:34px;height:17px"></div>
<div style="left:38px;top:368px;width:1484px;height:1px;background:#C0C0C0"></div>
<div class="n" style="left:249px;top:353px;width:37px;text-align:center;color:#000">2</div>
<div class="n" style="left:287px;top:353px;width:60px;color:#000">192.552</div>
<div class="n" style="left:348px;top:353px;width:59px;color:#000">-89.520</div>
<div class="n" style="left:408px;top:353px;width:60px;color:#000">282.081</div>
<div class="n" style="left:469px;top:353px;width:70px;color:#000">-1.111</div>
<div class="n" style="left:540px;top:353px;width:60px;color:#000">-0.017</div>
<div class="n" style="left:601px;top:353px;width:59px;color:#000">319.528</div>
<div class="n" style="left:661px;top:353px;width:60px;color:#000">17.859</div>
<div class="n" style="left:722px;top:353px;width:60px;color:#000">89.859</div>
<div class="n" style="left:783px;top:353px;width:60px;color:#000">4.944</div>
<div class="n" style="left:844px;top:353px;width:59px;color:#000">0.389</div>
<div class="n" style="left:904px;top:353px;width:60px;color:#000">4.002</div>
<div class="n" style="left:965px;top:353px;width:60px;color:#000">5.898</div>
<div class="n" style="left:1026px;top:353px;width:60px;color:#000">-10.013</div>
<div class="n" style="left:1087px;top:353px;width:69px;color:#000">9.737</div>
<div class="hc" style="left:5px;top:369px;width:34px;height:17px"></div>
<div style="left:38px;top:385px;width:1484px;height:1px;background:#C0C0C0"></div>
<div class="n" style="left:249px;top:370px;width:37px;text-align:center;color:#000">3</div>
<div class="n" style="left:287px;top:370px;width:60px;color:#000">159.580</div>
<div class="n" style="left:348px;top:370px;width:59px;color:#000">-253.590</div>
<div class="n" style="left:408px;top:370px;width:60px;color:#000">413.170</div>
<div class="n" style="left:469px;top:370px;width:70px;color:#000">5.360</div>
<div class="n" style="left:540px;top:370px;width:60px;color:#000">60.280</div>
<div class="n" style="left:601px;top:370px;width:59px;color:#000">1120.510</div>
<div class="n" style="left:661px;top:370px;width:60px;color:#000">30.010</div>
<div class="n" style="left:722px;top:370px;width:60px;color:#000">14.390</div>
<div class="n" style="left:783px;top:370px;width:60px;color:#000">10.220</div>
<div class="n" style="left:844px;top:370px;width:59px;color:#000">-1.180</div>
<div class="n" style="left:904px;top:370px;width:60px;color:#000">50.110</div>
<div class="n" style="left:965px;top:370px;width:60px;color:#000">66.190</div>
<div class="n" style="left:1026px;top:370px;width:60px;color:#000">78.890</div>
<div class="n" style="left:1087px;top:370px;width:69px;color:#000">0.737</div>
<div class="hc" style="left:5px;top:386px;width:34px;height:16px"></div>
<div style="left:38px;top:401px;width:1484px;height:1px;background:#C0C0C0"></div>
<div class="n" style="left:249px;top:387px;width:37px;text-align:center;color:#000;letter-spacing:-0.1px">Whole</div>
<div class="n" style="left:287px;top:387px;width:60px;color:#000">1607.416</div>
<div class="n" style="left:348px;top:387px;width:59px;color:#000">-253.590</div>
<div class="n" style="left:408px;top:387px;width:60px;color:#000">1861.006</div>
<div class="n" style="left:469px;top:387px;width:70px;color:#000">0.411</div>
<div class="n" style="left:540px;top:387px;width:60px;color:#000">2.980</div>
<div class="n" style="left:601px;top:387px;width:59px;color:#000">580.120</div>
<div class="n" style="left:661px;top:387px;width:60px;color:#000">24.080</div>
<div class="n" style="left:722px;top:387px;width:60px;color:#000">90.120</div>
<div class="n" style="left:783px;top:387px;width:60px;color:#000">95.330</div>
<div class="n" style="left:844px;top:387px;width:59px;color:#000">2.510</div>
<div class="n" style="left:904px;top:387px;width:60px;color:#000">1.880</div>
<div class="n" style="left:965px;top:387px;width:60px;color:#000">10.450</div>
<div class="n" style="left:1026px;top:387px;width:60px;color:#000">13.103</div>
<div class="n" style="left:1087px;top:387px;width:69px;color:#000">12.053</div>
<div class="hc" style="left:5px;top:402px;width:34px;height:17px"></div>
<div style="left:38px;top:418px;width:1484px;height:1px;background:#C0C0C0"></div>
<div class="tb" style="left:3px;top:404px;width:33px;text-align:center">5</div>
<div class="n" style="left:39px;top:403px;width:109px;color:#000">20210809_181439343</div>
<div class="n" style="left:149px;top:403px;width:100px;color:#000">20<span style="letter-spacing:0.6px;padding-left:0.7px">/</span>99<span style="letter-spacing:0.6px;padding-left:0.7px">/</span>99</div>
<div class="n" style="left:249px;top:403px;width:37px;text-align:center;color:#000">1</div>
<div class="n" style="left:1026px;top:403px;width:60px;color:#000">-52.895</div>
<div class="n" style="left:1087px;top:403px;width:69px;color:#000">1.500</div>
<div class="n" style="left:1157px;top:403px;width:70px;color:#000">18:14:39.343</div>
<div class="n" style="left:1228px;top:403px;width:75px;color:#000">18:14:39.375</div>
<div class="n" style="left:1304px;top:403px;width:70px;color:#000">18:14:41.375</div>
<div class="n" style="left:1375px;top:403px;width:37px;color:#000">2.032</div>
<div class="n" style="left:1413px;top:403px;width:72px;color:#000">172.20.89.6</div>
<div class="n" style="left:1486px;top:403px;width:36px;color:#000">2040</div>
<div class="hc" style="left:5px;top:419px;width:34px;height:17px"></div>
<div style="left:38px;top:435px;width:1484px;height:1px;background:#C0C0C0"></div>
<div class="n" style="left:249px;top:420px;width:37px;text-align:center;color:#000">2</div>
<div class="n" style="left:1026px;top:420px;width:60px;color:#000">-9.915</div>
<div class="n" style="left:1087px;top:420px;width:69px;color:#000">10.350</div>
<div class="hc" style="left:5px;top:436px;width:34px;height:17px"></div>
<div style="left:38px;top:452px;width:1484px;height:1px;background:#C0C0C0"></div>
<div class="n" style="left:249px;top:437px;width:37px;text-align:center;color:#000">3</div>
<div class="n" style="left:1026px;top:437px;width:60px;color:#000">85.556</div>
<div class="n" style="left:1087px;top:437px;width:69px;color:#000">0.650</div>
<div class="hc" style="left:5px;top:453px;width:34px;height:17px"></div>
<div style="left:38px;top:469px;width:1484px;height:1px;background:#C0C0C0"></div>
<div class="n" style="left:249px;top:454px;width:37px;text-align:center;color:#000;letter-spacing:-0.1px">Whole</div>
<div class="n" style="left:1026px;top:454px;width:60px;color:#000">-6.170</div>
<div class="n" style="left:1087px;top:454px;width:69px;color:#000">12.500</div>
<div class="hc" style="left:5px;top:470px;width:34px;height:17px"></div>
<div style="left:38px;top:486px;width:1484px;height:1px;background:#C0C0C0"></div>
<div class="tb" style="left:5px;top:472px;width:33px;text-align:center">Total</div>
<div class="n" style="left:39px;top:471px;width:109px;color:#000">20210809_181439343</div>
<div class="n" style="left:149px;top:471px;width:100px;color:#000">93<span style="letter-spacing:0.6px;padding-left:0.7px">/</span>499<span style="letter-spacing:0.6px;padding-left:0.7px">/</span>499</div>
<div class="n" style="left:249px;top:471px;width:37px;text-align:center;color:#000">1</div>
<div class="n" style="left:1026px;top:471px;width:60px;color:#000">-61.769</div>
<div class="n" style="left:1087px;top:471px;width:69px;color:#000">1.505</div>
<div class="n" style="left:1157px;top:471px;width:70px;color:#000">18:14.39.343</div>
<div class="n" style="left:1228px;top:471px;width:75px;color:#000">18:14.39.375</div>
<div class="n" style="left:1304px;top:471px;width:70px;color:#000">18:14:41.375</div>
<div class="n" style="left:1375px;top:471px;width:37px;color:#000">2.032</div>
<div class="hc" style="left:5px;top:487px;width:34px;height:17px"></div>
<div style="left:38px;top:503px;width:1484px;height:1px;background:#C0C0C0"></div>
<div class="n" style="left:249px;top:488px;width:37px;text-align:center;color:#000">2</div>
<div class="n" style="left:1026px;top:488px;width:60px;color:#000">-9.603</div>
<div class="n" style="left:1087px;top:488px;width:69px;color:#000">10.677</div>
<div class="hc" style="left:5px;top:504px;width:34px;height:17px"></div>
<div style="left:38px;top:520px;width:1484px;height:1px;background:#C0C0C0"></div>
<div class="n" style="left:249px;top:505px;width:37px;text-align:center;color:#000">3</div>
<div class="n" style="left:1026px;top:505px;width:60px;color:#000">84.103</div>
<div class="n" style="left:1087px;top:505px;width:69px;color:#000">0.613</div>
<div class="hc" style="left:5px;top:521px;width:34px;height:17px"></div>
<div style="left:38px;top:537px;width:1484px;height:1px;background:#C0C0C0"></div>
<div class="n" style="left:249px;top:522px;width:37px;text-align:center;color:#000;letter-spacing:-0.1px">Whole</div>
<div class="n" style="left:1026px;top:522px;width:60px;color:#000">-5.618</div>
<div class="n" style="left:1087px;top:522px;width:69px;color:#000">12.796</div>
<div style="left:38px;top:130px;width:1px;height:408px;background:#000"></div>
<div style="left:148px;top:130px;width:1px;height:408px;background:#C0C0C0"></div>
<div style="left:249px;top:130px;width:1px;height:408px;background:#C0C0C0"></div>
<div style="left:286px;top:130px;width:1px;height:408px;background:#C0C0C0"></div>
<div style="left:347px;top:130px;width:1px;height:408px;background:#C0C0C0"></div>
<div style="left:407px;top:130px;width:1px;height:408px;background:#C0C0C0"></div>
<div style="left:468px;top:130px;width:1px;height:408px;background:#C0C0C0"></div>
<div style="left:539px;top:130px;width:1px;height:408px;background:#C0C0C0"></div>
<div style="left:600px;top:130px;width:1px;height:408px;background:#C0C0C0"></div>
<div style="left:660px;top:130px;width:1px;height:408px;background:#C0C0C0"></div>
<div style="left:721px;top:130px;width:1px;height:408px;background:#C0C0C0"></div>
<div style="left:782px;top:130px;width:1px;height:408px;background:#C0C0C0"></div>
<div style="left:843px;top:130px;width:1px;height:408px;background:#C0C0C0"></div>
<div style="left:903px;top:130px;width:1px;height:408px;background:#C0C0C0"></div>
<div style="left:964px;top:130px;width:1px;height:408px;background:#C0C0C0"></div>
<div style="left:1025px;top:130px;width:1px;height:408px;background:#C0C0C0"></div>
<div style="left:1086px;top:130px;width:1px;height:408px;background:#C0C0C0"></div>
<div style="left:1156px;top:130px;width:1px;height:408px;background:#C0C0C0"></div>
<div style="left:1227px;top:130px;width:1px;height:408px;background:#C0C0C0"></div>
<div style="left:1303px;top:130px;width:1px;height:408px;background:#C0C0C0"></div>
<div style="left:1374px;top:130px;width:1px;height:408px;background:#C0C0C0"></div>
<div style="left:1412px;top:130px;width:1px;height:408px;background:#C0C0C0"></div>
<div style="left:1485px;top:130px;width:1px;height:408px;background:#C0C0C0"></div>
<div style="left:1522px;top:130px;width:1px;height:408px;background:#C0C0C0"></div>
<div class="dlg" style="left:232px;top:356px;width:819px;height:495px"></div>
<div style="left:235px;top:359px;width:814px;height:18px;background:#0A246A"></div>
<svg style="position:absolute;left:238px;top:359px" width="18" height="17" viewBox="0 0 18 17"><path d="M1.5 10.5 L5 9 L8.5 6" stroke="#E8001A" stroke-width="2.6" fill="none" stroke-linecap="round"/><ellipse cx="11.8" cy="8.4" rx="4.4" ry="6.9" transform="rotate(15 11.8 8.4)" fill="#A00010" stroke="#F2001A" stroke-width="3"/><circle cx="11.5" cy="10.8" r="1.4" fill="#301818"/></svg>
<div class="ttl" style="left:255px;top:362px;color:#fff">钢卷搜索统计系统</div>
<div class="raise" style="left:1030px;top:361px;width:16px;height:14px"></div>
<svg style="position:absolute;left:1034px;top:364px" width="8" height="7" viewBox="0 0 8 7"><path d="M0 0h2l2 2.5 2-2.5h2l-3 3.5 3 3.5h-2l-2-2.5-2 2.5h-2l3-3.5z" fill="#000"/></svg>
<div class="pan" style="left:238px;top:382px;width:205px;height:464px"></div>
<div class="pan" style="left:445px;top:382px;width:166px;height:464px"></div>
<div class="pan" style="left:613px;top:382px;width:292px;height:39px"></div>
<div class="pan" style="left:613px;top:422px;width:292px;height:120px"></div>
<div class="pan" style="left:613px;top:543px;width:292px;height:211px"></div>
<div class="pan" style="left:907px;top:382px;width:139px;height:372px"></div>
<div class="tb" style="left:244px;top:387px">搜索钢卷:</div>
<div class="tb" style="left:380px;top:387px">目标值</div>
<div class="cb" style="left:243px;top:404px;background:#fff"><svg width="7" height="7" style="position:absolute;left:2px;top:2px" viewBox="0 0 7 7"><path d="M0 2v3l2 2 5-5v-3l-5 5z" fill="#000"/></svg></div>
<div class="t" style="left:261px;top:405px">钢种</div>
<div class="fld" style="left:261px;top:421px;width:106px;height:19px;background:#fff"></div><div class="t" style="left:264px;top:425px;color:#000">普通冷轧料</div><div class="raise" style="left:350px;top:423px;width:15px;height:15px"></div><div class="arr" style="left:354px;top:428px"></div>
<div class="fld" style="left:261px;top:441px;width:106px;height:19px;background:#fff"></div><div class="ta" style="left:264px;top:445px;color:#000">5</div><div class="raise" style="left:350px;top:443px;width:15px;height:15px"></div><div class="arr" style="left:354px;top:448px"></div>
<div class="cb" style="left:372px;top:444px;background:#fff"><svg width="7" height="7" style="position:absolute;left:2px;top:2px" viewBox="0 0 7 7"><path d="M0 2v3l2 2 5-5v-3l-5 5z" fill="#000"/></svg></div>
<div class="t" style="left:390px;top:445px">包含</div>
<div class="cb" style="left:243px;top:465px;background:#fff"></div>
<div class="t" style="left:261px;top:465px">钢卷号</div>
<div class="fld" style="left:370px;top:462px;width:69px;height:18px;background:#fff"></div>
<div class="cb" style="left:243px;top:485px;background:#fff"></div>
<div class="t" style="left:261px;top:485px">出炉温度</div>
<div class="fld" style="left:369px;top:482px;width:34px;height:17px;background:#fff"></div><div class="ta" style="left:372px;top:486px;color:#000">0</div>
<div class="fld" style="left:404px;top:482px;width:35px;height:17px;background:#fff"></div><div class="ta" style="left:407px;top:486px;color:#000">0</div>
<div class="cb" style="left:243px;top:503px;background:#D4D0C8"></div>
<div class="t dis" style="left:261px;top:503px">粗轧入口温度</div>
<div class="fld" style="left:369px;top:500px;width:34px;height:17px;background:#fff"></div><div class="ta" style="left:372px;top:504px;color:#000">0</div>
<div class="fld" style="left:404px;top:500px;width:35px;height:17px;background:#fff"></div><div class="ta" style="left:407px;top:504px;color:#000">0</div>
<div class="cb" style="left:243px;top:521px;background:#fff"></div>
<div class="t" style="left:261px;top:521px">粗轧出口温度</div>
<div class="fld" style="left:369px;top:518px;width:34px;height:17px;background:#fff"></div><div class="ta" style="left:372px;top:522px;color:#000">0</div>
<div class="fld" style="left:404px;top:518px;width:35px;height:17px;background:#fff"></div><div class="ta" style="left:407px;top:522px;color:#000">0</div>
<div class="cb" style="left:243px;top:539px;background:#fff"></div>
<div class="t" style="left:261px;top:539px">粗轧出口宽度</div>
<div class="fld" style="left:369px;top:536px;width:34px;height:17px;background:#fff"></div><div class="ta" style="left:372px;top:540px;color:#000">0</div>
<div class="fld" style="left:404px;top:536px;width:35px;height:17px;background:#fff"></div><div class="ta" style="left:407px;top:540px;color:#000">0</div>
<div class="cb" style="left:243px;top:557px;background:#fff"></div>
<div class="t" style="left:261px;top:557px">精轧入口温度</div>
<div class="fld" style="left:369px;top:554px;width:34px;height:17px;background:#fff"></div><div class="ta" style="left:372px;top:558px;color:#000">0</div>
<div class="fld" style="left:404px;top:554px;width:35px;height:17px;background:#fff"></div><div class="ta" style="left:407px;top:558px;color:#000">0</div>
<div class="cb" style="left:243px;top:575px;background:#fff"></div>
<div class="t" style="left:261px;top:575px">精轧出口温度</div>
<div class="fld" style="left:369px;top:572px;width:34px;height:17px;background:#fff"></div><div class="ta" style="left:372px;top:576px;color:#000">0</div>
<div class="fld" style="left:404px;top:572px;width:35px;height:17px;background:#fff"></div><div class="ta" style="left:407px;top:576px;color:#000">0</div>
<div class="cb" style="left:243px;top:593px;background:#fff"><svg width="7" height="7" style="position:absolute;left:2px;top:2px" viewBox="0 0 7 7"><path d="M0 2v3l2 2 5-5v-3l-5 5z" fill="#000"/></svg></div>
<div class="t" style="left:261px;top:593px">厚度</div>
<div class="fld" style="left:369px;top:590px;width:34px;height:17px;background:#fff"></div><div class="ta" style="left:372px;top:594px;color:#000">3.60</div>
<div class="fld" style="left:404px;top:590px;width:35px;height:17px;background:#fff"></div><div class="ta" style="left:407px;top:594px;color:#000">5.98</div>
<div class="cb" style="left:243px;top:611px;background:#fff"></div>
<div class="t" style="left:261px;top:611px">宽度</div>
<div class="fld" style="left:369px;top:608px;width:34px;height:17px;background:#fff"></div><div class="ta" style="left:372px;top:612px;color:#000">1250</div>
<div class="fld" style="left:404px;top:608px;width:35px;height:17px;background:#fff"></div><div class="ta" style="left:407px;top:612px;color:#000">1250</div>
<div class="cb" style="left:243px;top:629px;background:#fff"></div>
<div class="t" style="left:261px;top:629px">平直度</div>
<div class="fld" style="left:369px;top:626px;width:34px;height:17px;background:#fff"></div><div class="ta" style="left:372px;top:630px;color:#000">0</div>
<div class="fld" style="left:404px;top:626px;width:35px;height:17px;background:#fff"></div><div class="ta" style="left:407px;top:630px;color:#000">0</div>
<div class="cb" style="left:243px;top:647px;background:#D4D0C8"></div>
<div class="t dis" style="left:261px;top:647px">凸度C25</div>
<div class="fld" style="left:369px;top:644px;width:34px;height:17px;background:#fff"></div><div class="ta" style="left:372px;top:648px;color:#000">0</div>
<div class="fld" style="left:404px;top:644px;width:35px;height:17px;background:#fff"></div><div class="ta" style="left:407px;top:648px;color:#000">0</div>
<div class="cb" style="left:243px;top:665px;background:#fff"></div>
<div class="t" style="left:261px;top:665px">凸度C40</div>
<div class="fld" style="left:369px;top:662px;width:34px;height:17px;background:#fff"></div><div class="ta" style="left:372px;top:666px;color:#000">0</div>
<div class="fld" style="left:404px;top:662px;width:35px;height:17px;background:#fff"></div><div class="ta" style="left:407px;top:666px;color:#000">0</div>
<div class="cb" style="left:243px;top:683px;background:#fff"></div>
<div class="t" style="left:261px;top:683px">楔形</div>
<div class="fld" style="left:369px;top:680px;width:34px;height:17px;background:#fff"></div><div class="ta" style="left:372px;top:684px;color:#000">0</div>
<div class="fld" style="left:404px;top:680px;width:35px;height:17px;background:#fff"></div><div class="ta" style="left:407px;top:684px;color:#000">0</div>
<div class="cb" style="left:243px;top:701px;background:#fff"></div>
<div class="t" style="left:261px;top:701px">卷取温度</div>
<div class="fld" style="left:369px;top:698px;width:34px;height:17px;background:#fff"></div><div class="ta" style="left:372px;top:702px;color:#000">0</div>
<div class="fld" style="left:404px;top:698px;width:35px;height:17px;background:#fff"></div><div class="ta" style="left:407px;top:702px;color:#000">0</div>
<div class="cb" style="left:243px;top:721px;background:#fff"></div>
<div class="t" style="left:261px;top:721px">炉号</div>
<div class="fld" style="left:369px;top:716px;width:33px;height:19px;background:#fff"></div><div class="ta" style="left:372px;top:720px;color:#000">1</div><div class="raise" style="left:385px;top:718px;width:15px;height:15px"></div><div class="arr" style="left:389px;top:723px"></div>
<div class="cb" style="left:243px;top:742px;background:#fff"></div>
<div class="t" style="left:261px;top:742px">卷取机号</div>
<div class="fld" style="left:369px;top:737px;width:33px;height:19px;background:#fff"></div><div class="ta" style="left:372px;top:741px;color:#000">1</div><div class="raise" style="left:385px;top:739px;width:15px;height:15px"></div><div class="arr" style="left:389px;top:744px"></div>
<div class="cb" style="left:243px;top:763px;background:#fff"></div>
<div class="t" style="left:261px;top:763px">换辊后第</div>
<div class="fld" style="left:369px;top:758px;width:33px;height:19px;background:#fff"></div><div class="ta" style="left:372px;top:762px;color:#000">1</div><div class="raise" style="left:385px;top:760px;width:15px;height:15px"></div><div class="arr" style="left:389px;top:765px"></div>
<div class="t" style="left:405px;top:763px">块</div>
<div class="cb" style="left:243px;top:784px;background:#fff"></div>
<div class="t" style="left:261px;top:784px">换规格后第</div>
<div class="fld" style="left:369px;top:779px;width:33px;height:19px;background:#fff"></div><div class="ta" style="left:372px;top:783px;color:#000">1</div><div class="raise" style="left:385px;top:781px;width:15px;height:15px"></div><div class="arr" style="left:389px;top:786px"></div>
<div class="t" style="left:405px;top:784px">块</div>
<div class="cb" style="left:243px;top:804px;background:#fff"></div>
<div class="t" style="left:261px;top:804px">日期范围</div>
<div class="fld" style="left:369px;top:800px;width:70px;height:20px;background:#D4D0C8"></div><div class="ta" style="left:372px;top:804px;color:#000">2020-08-09</div>
<div class="fld" style="left:369px;top:822px;width:70px;height:20px;background:#D4D0C8"></div><div class="ta" style="left:372px;top:826px;color:#000">2021-08-09</div>
<div class="tb" style="left:451px;top:387px">搜索区段:</div>
<div class="etch" style="left:450px;top:408px;width:157px;height:25px"></div>
<div class="t" style="left:456px;top:402px;background:#D4D0C8;padding:0 2px">统计方式</div>
<div class="radio" style="left:459px;top:417px"><div class="dot"></div></div>
<div class="t" style="left:477px;top:417px">百分比</div>
<div class="radio" style="left:532px;top:417px"></div>
<div class="t" style="left:549px;top:417px">长度</div>
<div class="t" style="left:450px;top:442px">切片数量:</div>
<div class="fld" style="left:505px;top:437px;width:35px;height:20px;background:#fff"></div><div class="ta" style="left:508px;top:441px;color:#000">3</div><div class="raise" style="left:523px;top:439px;width:15px;height:16px"></div><div class="arr" style="left:527px;top:445px"></div>
<div class="fld" style="left:543px;top:437px;width:28px;height:20px;background:#fff"></div><div class="ta" style="left:546px;top:441px;color:#000">5</div>
<div class="raise" style="left:573px;top:437px;width:33px;height:20px"></div>
<div class="t" style="left:577px;top:441px">均分</div>
<div class="t" style="left:468px;top:466px">切片1:</div>
<div class="fld" style="left:505px;top:463px;width:49px;height:17px;background:#fff"></div><div class="ta" style="left:507px;top:467px;color:#000">1</div>
<div class="ta" style="left:561px;top:466px">%</div>
<div class="t" style="left:468px;top:484px">切片2:</div>
<div class="fld" style="left:505px;top:481px;width:49px;height:17px;background:#fff"></div><div class="ta" style="left:507px;top:485px;color:#808080">98.00</div>
<div class="ta" style="left:561px;top:484px">%</div>
<div class="t" style="left:468px;top:502px">切片3:</div>
<div class="fld" style="left:505px;top:499px;width:49px;height:17px;background:#fff"></div><div class="ta" style="left:507px;top:503px;color:#000">1</div>
<div class="ta" style="left:561px;top:502px">%</div>
<div class="t dis" style="left:468px;top:520px">切片4:</div>
<div class="fld" style="left:505px;top:517px;width:49px;height:17px;background:#fff"></div>
<div class="ta dis" style="left:561px;top:520px">%</div>
<div class="t dis" style="left:468px;top:538px">切片5:</div>
<div class="fld" style="left:505px;top:535px;width:49px;height:17px;background:#fff"></div>
<div class="ta dis" style="left:561px;top:538px">%</div>
<div class="t dis" style="left:468px;top:556px">切片6:</div>
<div class="fld" style="left:505px;top:553px;width:49px;height:17px;background:#fff"></div>
<div class="ta dis" style="left:561px;top:556px">%</div>
<div class="t dis" style="left:468px;top:574px">切片7:</div>
<div class="fld" style="left:505px;top:571px;width:49px;height:17px;background:#fff"></div>
<div class="ta dis" style="left:561px;top:574px">%</div>
<div class="t dis" style="left:468px;top:592px">切片8:</div>
<div class="fld" style="left:505px;top:589px;width:49px;height:17px;background:#fff"></div>
<div class="ta dis" style="left:561px;top:592px">%</div>
<div class="t dis" style="left:468px;top:610px">切片9:</div>
<div class="fld" style="left:505px;top:607px;width:49px;height:17px;background:#fff"></div>
<div class="ta dis" style="left:561px;top:610px">%</div>
<div class="t dis" style="left:462px;top:628px">切片10:</div>
<div class="fld" style="left:505px;top:625px;width:49px;height:17px;background:#fff"></div>
<div class="ta dis" style="left:561px;top:628px">%</div>
<div class="t dis" style="left:462px;top:646px">切片11:</div>
<div class="fld" style="left:505px;top:643px;width:49px;height:17px;background:#fff"></div>
<div class="ta dis" style="left:561px;top:646px">%</div>
<div class="t dis" style="left:462px;top:664px">切片12:</div>
<div class="fld" style="left:505px;top:661px;width:49px;height:17px;background:#fff"></div>
<div class="ta dis" style="left:561px;top:664px">%</div>
<div class="t dis" style="left:462px;top:682px">切片13:</div>
<div class="fld" style="left:505px;top:679px;width:49px;height:17px;background:#fff"></div>
<div class="ta dis" style="left:561px;top:682px">%</div>
<div class="t dis" style="left:462px;top:700px">切片14:</div>
<div class="fld" style="left:505px;top:697px;width:49px;height:17px;background:#fff"></div>
<div class="ta dis" style="left:561px;top:700px">%</div>
<div class="t dis" style="left:462px;top:718px">切片15:</div>
<div class="fld" style="left:505px;top:715px;width:49px;height:17px;background:#fff"></div>
<div class="ta dis" style="left:561px;top:718px">%</div>
<div class="t dis" style="left:462px;top:736px">切片16:</div>
<div class="fld" style="left:505px;top:733px;width:49px;height:17px;background:#fff"></div>
<div class="ta dis" style="left:561px;top:736px">%</div>
<div class="t dis" style="left:462px;top:754px">切片17:</div>
<div class="fld" style="left:505px;top:751px;width:49px;height:17px;background:#fff"></div>
<div class="ta dis" style="left:561px;top:754px">%</div>
<div class="t dis" style="left:462px;top:772px">切片18:</div>
<div class="fld" style="left:505px;top:769px;width:49px;height:17px;background:#fff"></div>
<div class="ta dis" style="left:561px;top:772px">%</div>
<div class="t dis" style="left:462px;top:790px">切片19:</div>
<div class="fld" style="left:505px;top:787px;width:49px;height:17px;background:#fff"></div>
<div class="ta dis" style="left:561px;top:790px">%</div>
<div class="t dis" style="left:462px;top:808px">切片20:</div>
<div class="fld" style="left:505px;top:805px;width:49px;height:17px;background:#fff"></div>
<div class="ta dis" style="left:561px;top:808px">%</div>
<div class="t dis" style="left:462px;top:826px">切片21</div>
<div class="fld" style="left:505px;top:823px;width:49px;height:17px;background:#fff"></div>
<div class="ta dis" style="left:561px;top:826px">%</div>
<div class="tb" style="left:619px;top:387px">搜索序列:</div>
<div class="cb" style="left:618px;top:403px;background:#D4D0C8"></div>
<div class="t dis" style="left:635px;top:404px">时序</div>
<div class="cb" style="left:762px;top:403px;background:#D4D0C8"><svg width="7" height="7" style="position:absolute;left:2px;top:2px" viewBox="0 0 7 7"><path d="M0 2v3l2 2 5-5v-3l-5 5z" fill="#808080"/></svg></div>
<div class="t dis" style="left:780px;top:404px">长度</div>
<div class="cb" style="left:618px;top:425px;background:#fff"></div>
<div class="tb" style="left:636px;top:425px">按合格统计:</div>
<div class="fld" style="left:707px;top:441px;width:30px;height:17px;background:#fff"></div><div class="ta" style="left:710px;top:445px;color:#000">95</div>
<div class="ta" style="left:755px;top:443px">m</div>
<div class="fld" style="left:790px;top:441px;width:29px;height:17px;background:#fff"></div><div class="ta" style="left:793px;top:445px;color:#000">126</div>
<svg style="position:absolute;left:700px;top:455px" width="120" height="60" viewBox="0 0 120 60">
<path d="M15.5 9 L22 9.5 L35 10 L45 11 L52 14 L56 19 L58 26 L59 35 L59.5 45 L60 53.5 L61 44 L63 36 L66 29 L70 24 L75 21 L82 18 L90 15 L96 11 L103 7" stroke="#000" stroke-width="1.3" fill="none"/>
<path d="M22.5 4.5v18M101.5 4.5v18" stroke="#0000C0" stroke-width="1"/>
<path d="M47 53.5h44.5M47.5 49.5v7M91.5 49.5v7" stroke="#0000C0" stroke-width="1"/>
</svg>
<div class="fld" style="left:743px;top:518px;width:19px;height:17px;background:#fff"></div><div class="ta" style="left:746px;top:522px;color:#000">5</div>
<div class="fld" style="left:768px;top:518px;width:19px;height:17px;background:#fff"></div><div class="ta" style="left:771px;top:522px;color:#000">10</div>
<div class="tb" style="left:619px;top:551px">搜索信号: ( Search.ini )</div>
<div class="t" style="left:628px;top:570px">连接识别号:</div>
<div class="fld" style="left:693px;top:567px;width:72px;height:19px;background:#fff"></div><div class="ta" style="left:696px;top:571px;color:#000">21</div>
<div class="t" style="left:664px;top:591px">通道:</div>
<div class="fld" style="left:693px;top:588px;width:72px;height:19px;background:#fff"></div><div class="ta" style="left:696px;top:592px;color:#000">75</div>
<div class="t" style="left:664px;top:612px">名称:</div>
<div class="fld" style="left:693px;top:609px;width:206px;height:19px;background:#fff"></div><div class="t" style="left:696px;top:613px;color:#000">FM厚度偏差</div><div class="raise" style="left:882px;top:611px;width:15px;height:15px"></div><div class="arr" style="left:886px;top:616px"></div>
<div class="t" style="left:664px;top:633px">备注:</div>
<div class="fld" style="left:693px;top:630px;width:206px;height:19px;background:#fff"></div><div class="raise" style="left:882px;top:632px;width:15px;height:15px"></div><div class="arr" style="left:886px;top:637px"></div>
<div class="fld" style="left:693px;top:651px;width:72px;height:19px;background:#fff"></div><div class="ta" style="left:696px;top:655px;color:#000">-888</div>
<div class="cb" style="left:769px;top:654px;background:#fff"></div>
<div class="t" style="left:787px;top:654px">排除值</div>
<div class="tb" style="left:619px;top:680px">搜索指标:</div>
<div class="t" style="left:664px;top:700px">上限:</div>
<div class="fld" style="left:693px;top:696px;width:72px;height:19px;background:#fff"></div><div class="ta" style="left:696px;top:700px;color:#000">30</div>
<div class="t" style="left:664px;top:720px">下限:</div>
<div class="fld" style="left:693px;top:717px;width:72px;height:19px;background:#fff"></div><div class="ta" style="left:696px;top:721px;color:#000">-30</div>
<div class="cb" style="left:769px;top:709px;background:#fff"></div>
<div class="t" style="left:787px;top:709px">按PDI</div>
<svg style="position:absolute;left:640px;top:598px" width="150" height="165" viewBox="0 0 150 165">
<ellipse cx="77.5" cy="19.6" rx="60.6" ry="13.4" transform="rotate(-1.5 77.5 19.6)" stroke="#E80010" stroke-width="3.2" fill="none"/>
<ellipse cx="55.8" cy="116.5" rx="47.5" ry="39.9" transform="rotate(8 55.8 116.5)" stroke="#E80010" stroke-width="3.2" fill="none"/>
</svg>
<div class="tb" style="left:913px;top:387px">搜索输出:</div>
<div class="cb" style="left:913px;top:405px;background:#fff"></div>
<div class="t" style="left:931px;top:406px">最大值</div>
<div class="cb" style="left:913px;top:427px;background:#fff"></div>
<div class="t" style="left:931px;top:428px">最小值</div>
<div class="cb" style="left:913px;top:449px;background:#fff"></div>
<div class="t" style="left:931px;top:450px">极差</div>
<div class="cb" style="left:913px;top:471px;background:#fff"></div>
<div class="t" style="left:931px;top:472px">上下限间的平均值</div>
<div class="cb" style="left:913px;top:493px;background:#fff"><svg width="7" height="7" style="position:absolute;left:2px;top:2px" viewBox="0 0 7 7"><path d="M0 2v3l2 2 5-5v-3l-5 5z" fill="#000"/></svg></div>
<div class="t" style="left:931px;top:494px">平均值</div>
<div class="cb" style="left:913px;top:515px;background:#fff"><svg width="7" height="7" style="position:absolute;left:2px;top:2px" viewBox="0 0 7 7"><path d="M0 2v3l2 2 5-5v-3l-5 5z" fill="#000"/></svg></div>
<div class="t" style="left:931px;top:516px">方差</div>
<div class="cb" style="left:913px;top:536px;background:#fff"><svg width="7" height="7" style="position:absolute;left:2px;top:2px" viewBox="0 0 7 7"><path d="M0 2v3l2 2 5-5v-3l-5 5z" fill="#000"/></svg></div>
<div class="t" style="left:931px;top:537px">标准差</div>
<div class="cb" style="left:913px;top:558px;background:#fff"><svg width="7" height="7" style="position:absolute;left:2px;top:2px" viewBox="0 0 7 7"><path d="M0 2v3l2 2 5-5v-3l-5 5z" fill="#000"/></svg></div>
<div class="t" style="left:931px;top:559px">百分比</div>
<div class="cb" style="left:913px;top:580px;background:#fff"></div>
<div class="t" style="left:931px;top:581px">峰值</div>
<div class="cb" style="left:913px;top:602px;background:#fff"></div>
<div class="t" style="left:931px;top:603px">偏态</div>
<div class="cb" style="left:913px;top:624px;background:#fff"></div>
<div class="t" style="left:931px;top:625px">1/4值</div>
<div class="cb" style="left:913px;top:646px;background:#fff"></div>
<div class="t" style="left:931px;top:647px">中值</div>
<div class="cb" style="left:913px;top:668px;background:#fff"></div>
<div class="t" style="left:931px;top:669px">3/4值</div>
<div class="cb" style="left:913px;top:690px;background:#fff"></div>
<div class="t" style="left:931px;top:691px">上升沿计数</div>
<div class="btn" style="left:920px;top:715px;width:53px;height:25px"></div>
<div class="t" style="left:934px;top:721px">全选</div>
<div class="btn" style="left:979px;top:715px;width:54px;height:25px"></div>
<div class="t" style="left:987px;top:721px">全不选</div>
<div class="btn def" style="left:741px;top:790px;width:85px;height:28px"></div>
<div style="left:745px;top:794px;width:77px;height:20px;border:1px dotted #000;box-sizing:border-box"></div>
<svg style="position:absolute;left:760px;top:795px" width="20" height="17" viewBox="0 0 20 17"><path d="M1 8 L4 6 L8 10 L17 1 L19 3 L8 15 Z" fill="#109010" stroke="#045004" stroke-width="1"/></svg>
<div class="t" style="left:783px;top:798px">搜索</div>
<div class="btn" style="left:845px;top:790px;width:84px;height:28px"></div>
<svg style="position:absolute;left:866px;top:796px" width="16" height="16" viewBox="0 0 16 16"><path d="M2 1 L5 1 L8 5 L12 0 L15 2 L10 8 L14 14 L10 15 L7 11 L3 16 L0 14 L5 8 Z" fill="#B00000" stroke="#600000" stroke-width="0.8"/></svg>
<div class="t" style="left:886px;top:798px">退出</div>
</body></html>
